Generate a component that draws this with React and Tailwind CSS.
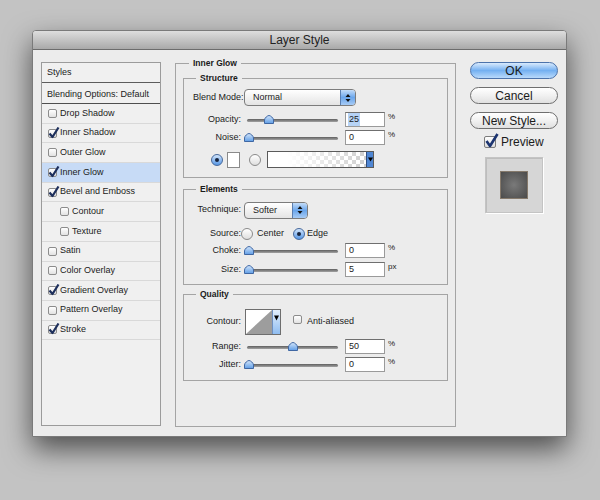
const FONT = "font-['Liberation_Sans',Arial,sans-serif]";

const Check = ({ checked }) => (
  <span className="relative inline-block w-[9px] h-[9px] shrink-0 rounded-[2px] border border-[#8c8c8c] bg-linear-to-b from-white to-[#e2e2e2]">
    {checked && (
      <svg className="absolute left-[-1px] top-[-3px]" width="12" height="12" viewBox="0 0 12 12">
        <path d="M1.5 6.5 L4.5 10 L10.5 0.5" stroke="#1d2f5c" strokeWidth="2.2" fill="none" strokeLinejoin="round" />
      </svg>
    )}
  </span>
);

const Radio = ({ on }) => (
  <span
    className={`flex items-center justify-center w-[12px] h-[12px] shrink-0 rounded-full border ${
      on ? 'border-[#47699c] bg-linear-to-b from-[#d2e5fb] to-[#5596e4]' : 'border-[#8a8a8a] bg-linear-to-b from-white to-[#dedede]'
    }`}
  >
    {on && <span className="w-[4px] h-[4px] rounded-full bg-[#17243d]" />}
  </span>
);

const Stepper = () => (
  <span className="flex w-[15px] items-center justify-center border-l border-[#5a7eb0] bg-linear-to-b from-[#c3dcf8] via-[#6aa6ec] to-[#a7cbf5]">
    <svg width="6" height="10" viewBox="0 0 6 10">
      <path d="M0.5 4 L3 1 L5.5 4 Z M0.5 6 L3 9 L5.5 6 Z" fill="#111" />
    </svg>
  </span>
);

const Select = ({ value, width }) => (
  <div className={`flex h-[17px] ${width} overflow-hidden rounded-[4px] border border-[#7c7c7c] bg-linear-to-b from-white to-[#e4e4e4]`}>
    <span className="flex-1 pl-[8px] text-[9px] leading-[15px]">{value}</span>
    <Stepper />
  </div>
);

const Input = ({ value, selected }) => (
  <div className="ml-[6px] flex h-[15px] w-[40px] items-center border border-[#9a9a9a] border-t-[#6f6f6f] bg-white pl-[2px] text-[9px]">
    <span className={selected ? 'bg-[#b6d3f6] px-[1px]' : 'px-[1px]'}>{value}</span>
  </div>
);

const Slider = ({ thumb }) => (
  <div className="relative ml-[3px] h-[10px] w-[95px]">
    <div className="absolute left-[3px] right-[1px] top-[4px] h-[3px] rounded-full bg-linear-to-b from-[#5f5f5f] to-[#a3a3a3]" />
    <svg className="absolute top-[0px]" style={{ left: thumb }} width="10" height="9" viewBox="0 0 10 9">
      <defs>
        <linearGradient id="th" x1="0" y1="0" x2="0" y2="1">
          <stop offset="0" stopColor="#d5e7fb" />
          <stop offset="1" stopColor="#5f9de6" />
        </linearGradient>
      </defs>
      <path d="M5 0.5 C6.5 0.5 9.5 3 9.5 5 L9.5 8.5 L0.5 8.5 L0.5 5 C0.5 3 3.5 0.5 5 0.5 Z" fill="url(#th)" stroke="#3f67a3" strokeWidth="1" />
    </svg>
  </div>
);

const SliderRow = ({ label, thumb, value, unit, selected, className = '' }) => (
  <div className={`flex h-[15px] items-center ${className}`}>
    <span className="w-[48px] whitespace-nowrap text-right">{label}</span>
    <Slider thumb={thumb} />
    <Input value={value} selected={selected} />
    <span className="ml-[3px] self-start text-[8px] leading-[9px]">{unit}</span>
  </div>
);

const Group = ({ title, className = '', children }) => (
  <fieldset className={`border border-[#a4a4a4] pl-[9px] ${className}`}>
    <legend className="ml-[3px] px-[4px] text-[8.5px] font-bold leading-[12px]">{title}</legend>
    {children}
  </fieldset>
);

const styles = [
  { name: 'Drop Shadow' },
  { name: 'Inner Shadow', on: true },
  { name: 'Outer Glow' },
  { name: 'Inner Glow', on: true, active: true },
  { name: 'Bevel and Emboss', on: true },
  { name: 'Contour', sub: true },
  { name: 'Texture', sub: true },
  { name: 'Satin' },
  { name: 'Color Overlay' },
  { name: 'Gradient Overlay', on: true },
  { name: 'Pattern Overlay' },
  { name: 'Stroke', on: true },
];

const StyleList = () => (
  <div className="mt-[5px] h-[364px] w-[120px] border border-[#9b9b9b] bg-[#f0f0f0] text-[9px]">
    <div className="flex h-[20px] items-center border-b border-[#5c5c5c] pl-[5px]">Styles</div>
    <div className="flex h-[21px] items-center border-b border-[#4e4e4e] pl-[5px] pt-[3px]">Blending Options: Default</div>
    {styles.map((s) => (
      <div
        key={s.name}
        className={`flex h-[19.7px] items-center gap-[3px] border-b border-[#d9d9d9] ${s.sub ? 'pl-[18px]' : 'pl-[6px]'} ${
          s.active ? 'bg-[#c7dbf6]' : ''
        }`}
      >
        <Check checked={s.on} />
        <span>{s.name}</span>
      </div>
    ))}
  </div>
);

const Button = ({ children, primary }) => (
  <div
    className={`flex h-[17px] w-[88px] items-center justify-center rounded-full border text-[12px] leading-none ${
      primary
        ? 'border-[#4c73ab] bg-linear-to-b from-[#d9eafc] via-[#74b0f1] to-[#b9dafb]'
        : 'border-[#6f6f6f] bg-linear-to-b from-white via-[#f1f1f1] to-[#e0e0e0]'
    }`}
  >
    {children}
  </div>
);

const RightColumn = () => (
  <div className="mt-[5px] flex w-[88px] flex-col">
    <div className="flex flex-col gap-[8px]">
      <Button primary>OK</Button>
      <Button>Cancel</Button>
      <Button>New Style...</Button>
    </div>
    <div className="ml-[14px] mt-[7px] flex items-center gap-[5px]">
      <span className="relative inline-block h-[12px] w-[12px] rounded-[2px] border border-[#7c7c7c] bg-linear-to-b from-white to-[#dcdcdc]">
        <svg className="absolute left-[0px] top-[-4px]" width="14" height="15" viewBox="0 0 14 15">
          <path d="M1.5 8 L5 13 L12.5 1" stroke="#1c3470" strokeWidth="2.6" fill="none" strokeLinejoin="round" />
        </svg>
      </span>
      <span className="text-[12px] leading-none">Preview</span>
    </div>
    <div className="ml-[15px] mt-[9px] flex h-[56px] w-[58px] items-center justify-center border border-[#c4c4c4] bg-[#d6d6d6] shadow-[inset_1px_1px_0_#bdbdbd,1px_1px_0_#fff]">
      <div className="h-[28px] w-[28px] border border-[#85796b] bg-radial from-[#7a7a7a] to-[#4b4b4b]" />
    </div>
  </div>
);

const Checker = () => (
  <div className="ml-[6px] flex h-[17px] w-[107px] border border-[#5a5a5a]">
    <div className="relative flex-1 bg-[repeating-conic-gradient(#cfcfcf_0%_25%,#fff_0%_50%)] bg-[length:8px_8px]">
      <div className="absolute inset-0 bg-linear-to-r from-white from-20% to-white/0" />
    </div>
    <div className="flex w-[7px] items-center justify-center border-l border-[#2e4d80] bg-[#4f86d3]">
      <svg width="5" height="5" viewBox="0 0 5 5">
        <path d="M0 0.5 L5 0.5 L2.5 4.5 Z" fill="#000" />
      </svg>
    </div>
  </div>
);

const ContourBox = () => (
  <div className="ml-[4px] flex h-[26px] w-[36px] border border-[#6e6e6e]">
    <svg width="26" height="24" viewBox="0 0 26 24" className="bg-white">
      <path d="M0 24 L26 0 L26 24 Z" fill="#9d9d9d" />
    </svg>
    <div className="flex flex-1 justify-center border-l border-[#6e8fc0] bg-linear-to-b from-[#e2eefc] to-[#8fbdf1] pt-[5px]">
      <svg width="5" height="6" viewBox="0 0 5 6">
        <path d="M0 0.5 L5 0.5 L2.5 5.5 Z" fill="#000" />
      </svg>
    </div>
  </div>
);

const InnerGlowPanel = () => (
  <fieldset className="h-[370px] w-[281px] border border-[#a4a4a4] px-[7px] text-[9px] text-[#1b1b1b]">
    <legend className="ml-[6px] px-[4px] text-[8.5px] font-bold leading-[12px]">Inner Glow</legend>

    <Group title="Structure" className="mt-[3px] pb-[9px]">
      <div className="mt-[5px] flex h-[17px] items-center">
        <span className="w-[49px] whitespace-nowrap">Blend Mode:</span>
        <span className="ml-[2px]">
          <Select value="Normal" width="w-[112px]" />
        </span>
      </div>
      <SliderRow label="Opacity:" thumb={20} value="25" unit="%" selected className="mt-[6px]" />
      <SliderRow label="Noise:" thumb={0} value="0" unit="%" className="mt-[3px]" />
      <div className="mt-[6px] flex h-[17px] items-center">
        <span className="ml-[18px]">
          <Radio on />
        </span>
        <span className="ml-[4px] h-[16px] w-[13px] border border-[#8a8a8a] bg-white" />
        <span className="ml-[9px]">
          <Radio />
        </span>
        <Checker />
      </div>
    </Group>

    <Group title="Elements" className="mt-[5px] pb-[7px]">
      <div className="mt-[7px] flex h-[16px] items-center">
        <span className="w-[48px] text-right">Technique:</span>
        <span className="ml-[3px]">
          <Select value="Softer" width="w-[64px]" />
        </span>
      </div>
      <div className="mt-[10px] flex h-[12px] items-center">
        <span className="w-[48px] text-right">Source:</span>
        <Radio />
        <span className="ml-[4px]">Center</span>
        <span className="ml-[9px]">
          <Radio on />
        </span>
        <span className="ml-[2px]">Edge</span>
      </div>
      <SliderRow label="Choke:" thumb={0} value="0" unit="%" className="mt-[3px]" />
      <SliderRow label="Size:" thumb={0} value="5" unit="px" className="mt-[4px]" />
    </Group>

    <Group title="Quality" className="mt-[3px] pb-[8px]">
      <div className="mt-[9px] flex h-[26px] items-center">
        <span className="w-[48px] text-right">Contour:</span>
        <ContourBox />
        <span className="ml-[12px]">
          <Check />
        </span>
        <span className="ml-[5px]">Anti-aliased</span>
      </div>
      <SliderRow label="Range:" thumb={44} value="50" unit="%" className="mt-[4px]" />
      <SliderRow label="Jitter:" thumb={0} value="0" unit="%" className="mt-[3px]" />
    </Group>
  </fieldset>
);

export default function App() {
  return (
    <div className={`${FONT} h-[500px] w-[600px] overflow-hidden bg-[#c3c3c3] pl-[32px] pt-[30px] text-[#1b1b1b]`}>
      <div className="h-[407px] w-[535px] rounded-t-[4px] border border-[#7a7a7a] bg-[#ececec] shadow-[0_12px_28px_rgba(0,0,0,0.6)]">
        <div className="flex h-[19px] items-center justify-center rounded-t-[3px] border-b border-[#6c6c6c] bg-linear-to-b from-[#dedede] to-[#a9a9a9] text-[12px] text-[#222]">
          Layer Style
        </div>
        <div className="flex items-start gap-[14px] pl-[8px] pt-[7px]">
          <StyleList />
          <InnerGlowPanel />
          <RightColumn />
        </div>
      </div>
    </div>
  );
}
